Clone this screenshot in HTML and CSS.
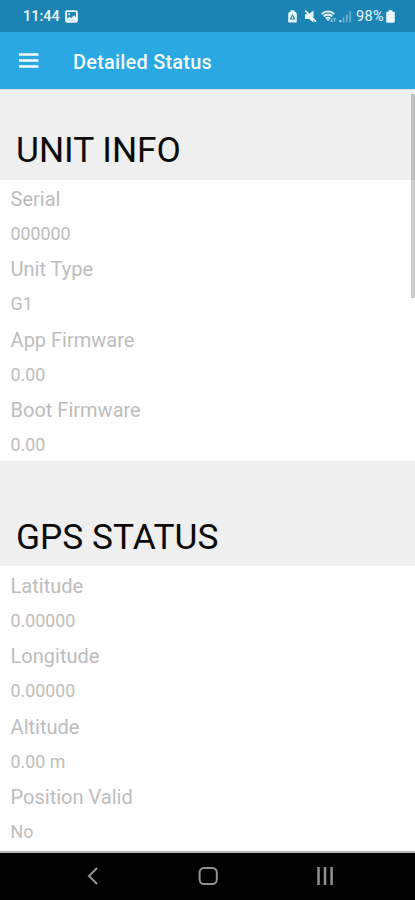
FILE: index.html
```html
<!DOCTYPE html>
<html lang="en">
<head>
<meta charset="utf-8">
<title>Detailed Status</title>
<link rel="stylesheet" href="styles.css">
</head>
<body>
<div class="status-bar">
  <span class="clock">11:44</span>
  <svg class="picture" width="13" height="13" viewBox="0 0 13 13"><rect x="1.1" y="1.1" width="10.8" height="10.6" rx="1" fill="none" stroke="currentColor" stroke-width="1.9"/><path d="M2 10.8V8.8L4.5 6.8L6 8.3L9 5.3L11 7.5V10.8Z" fill="currentColor"/><circle cx="4.2" cy="4.2" r="1" fill="currentColor"/></svg>
  <div class="indicators">
    <svg width="9" height="13" viewBox="0 0 9 13"><path d="M2.6 1Q2.6 .3 3.4 .3H5.6Q6.4 .3 6.4 1V1.6Q8.8 2.2 8.8 4V11.4Q8.8 12.6 7.6 12.6H1.4Q.2 12.6 .2 11.4V4Q.2 2.2 2.6 1.6Z" fill="currentColor"/><path d="M2.5 9L4.5 4.9L6.5 9Z" fill="none" stroke="#1b84b4" stroke-width="1.1"/></svg>
    <svg class="mute" width="13" height="13" viewBox="0 0 13 13"><path d="M1 4.2H3.6L9.5 9.6V12.6L5 8.9H1ZM5.2 3.7L9.5 .4V7.5Z" fill="currentColor"/><path d="M1.2 .6L12 11.6" stroke="currentColor" stroke-width="1.7"/></svg>
    <svg class="wifi" width="16" height="13" viewBox="0 0 16 13"><path d="M.8 4Q7 -1.3 13.2 4M2.7 6.3Q7 2.7 11.3 6.3M4.8 8.5Q7 6.8 9.2 8.5" fill="none" stroke="currentColor" stroke-width="1.8"/><path d="M5.5 9H8.5L7 11.2Z" fill="currentColor"/><path d="M10.7 8V12M9.4 10.6L10.7 12L12 10.6M13.7 12V8M12.5 9.4L13.7 8L15 9.4" fill="none" stroke="currentColor" stroke-width=".8" opacity=".65"/></svg>
    <svg class="signal" width="13" height="13" viewBox="0 0 13 13"><path d="M1.3 10V12.3" stroke="currentColor" stroke-width="1.8" opacity=".8"/><path d="M4.5 7.5V12.3M7.8 4.5V12.3M11.2 1V12.3" stroke="currentColor" stroke-width="1.6" opacity=".4"/></svg>
    <span class="percent">98%</span>
    <svg width="9" height="13" viewBox="0 0 9 13"><path d="M2.5 1Q2.5 .3 3.3 .3H5.7Q6.5 .3 6.5 1V1.8H7.8Q8.8 1.8 8.8 2.8V11.5Q8.8 12.7 7.6 12.7H1.4Q.2 12.7 .2 11.5V2.8Q.2 1.8 1.2 1.8H2.5Z" fill="currentColor"/></svg>
  </div>
</div>
<header class="app-bar">
  <svg width="20" height="15" viewBox="0 0 20 15"><path d="M0 1.5H19.5M0 7.5H19.5M0 13.5H19.5" stroke="currentColor" stroke-width="2.6"/></svg>
  <h1>Detailed Status</h1>
</header>
<main class="content">
  <h2 class="first"><span>UNIT INFO</span></h2>
  <dl>
    <dt>Serial</dt><dd>000000</dd>
    <dt>Unit Type</dt><dd>G1</dd>
    <dt>App Firmware</dt><dd>0.00</dd>
    <dt>Boot Firmware</dt><dd>0.00</dd>
  </dl>
  <h2><span>GPS STATUS</span></h2>
  <dl>
    <dt>Latitude</dt><dd>0.00000</dd>
    <dt>Longitude</dt><dd>0.00000</dd>
    <dt>Altitude</dt><dd>0.00 m</dd>
    <dt>Position Valid</dt><dd>No</dd>
  </dl>
  <div class="scroll-thumb"></div>
</main>
<nav class="nav-bar">
  <svg width="12" height="18" viewBox="0 0 12 18"><path d="M10 1L2 9L10 17" fill="none" stroke="currentColor" stroke-width="2"/></svg>
  <svg width="20" height="18" viewBox="0 0 20 18"><rect x="1.6" y="1" width="17.2" height="16" rx="4.5" fill="none" stroke="currentColor" stroke-width="2"/></svg>
  <svg width="18" height="18" viewBox="0 0 18 18"><path d="M2.5 0V18M9 0V18M15.6 0V18" stroke="currentColor" stroke-width="2.5"/></svg>
</nav>
</body>
</html>
```
FILE: styles.css
```css
* { box-sizing: border-box; }
body {
  margin: 0;
  width: 415px;
  height: 900px;
  overflow: hidden;
  display: flex;
  flex-direction: column;
  font-family: Roboto, "Liberation Sans", sans-serif;
  background: #fff;
}
svg { display: block; flex: none; }
.status-bar {
  height: 32px;
  flex: none;
  display: flex;
  align-items: center;
  padding: 0 20.5px 0 23px;
  background: #1b84b4;
  color: #eef7fb;
  font-size: 14.5px;
}
.clock { width: 37px; font-weight: 500; padding-top: 1px; }
.picture { margin-left: 5px; }
.indicators { margin-left: auto; display: flex; align-items: center; }
.mute { margin-left: 7px; }
.wifi { margin-left: 4px; }
.signal { margin-left: 2px; }
.percent { width: 28px; margin-left: 4px; margin-right: 1.5px; padding-top: 1px; letter-spacing: .3px; }
.app-bar {
  height: 57px;
  flex: none;
  display: flex;
  align-items: center;
  padding: 0 19px;
  background: #29a8e1;
  color: #f5fbff;
}
.app-bar h1 { margin: 2px 0 0 34px; font-size: 20px; font-weight: 500; letter-spacing: .2px; white-space: nowrap; }
.content {
  position: relative;
  height: 764px;
  flex: none;
  overflow: hidden;
  border-top: 1px solid #d5e2ea;
  border-bottom: 2px solid #b8b8b8;
}
h2 {
  height: 105.4px;
  margin: 0;
  padding: 0 16px 8px;
  display: flex;
  align-items: flex-end;
  background: #efefef;
  color: #0a0a0a;
  font-size: 35.3px;
  line-height: 42px;
  font-weight: 400;
}
h2.first { height: 89.5px; padding-bottom: 9px; }
dl { margin: 0; }
dt, dd {
  height: 35.2px;
  margin: 0;
  padding: 2.4px 10.6px 0;
  line-height: 34px;
  color: #bdbdbd;
}
dt { font-size: 20px; }
dd { font-size: 17.8px; }
.scroll-thumb {
  position: absolute;
  top: 4px;
  right: 0;
  width: 4px;
  height: 204px;
  background: rgba(0, 0, 0, .2);
}
.nav-bar {
  height: 47px;
  flex: none;
  display: flex;
  justify-content: space-between;
  align-items: center;
  padding: 0 81px 1px 87px;
  background: #000;
  color: #929292;
}
```
